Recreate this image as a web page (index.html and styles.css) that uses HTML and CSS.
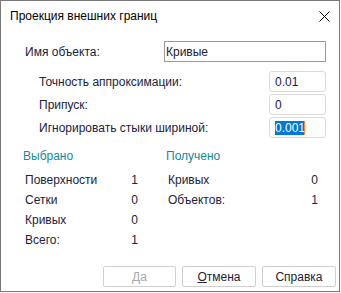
FILE: index.html
```html
<!DOCTYPE html>
<html>
<head>
  <title>Проекция внешних границ</title>
  <meta http-equiv="Content-Type" content="text/html; charset=utf-8">
  <link rel="stylesheet" href="styles.css">
</head>
<body>
<div class="dialog">
  <div class="titlebar">
    <span class="title">Проекция внешних границ</span>
    <svg class="close" width="11" height="11" viewBox="0 0 11 11">
      <path d="M0.5 0.5 L10.5 10.5 M10.5 0.5 L0.5 10.5" stroke="#000" stroke-width="1" fill="none"/>
    </svg>
  </div>

  <div class="name-row">
    <span class="name-label">Имя объекта:</span>
    <div class="field field-name">Кривые</div>
  </div>

  <div class="params">
    <span>Точность аппроксимации:</span>
    <div class="field field-num">0.01</div>
    <span>Припуск:</span>
    <div class="field field-num">0</div>
    <span>Игнорировать стыки шириной:</span>
    <div class="field field-num"><span class="selected">0.001</span></div>
  </div>

  <div class="stats">
    <div class="col">
      <div class="col-head">Выбрано</div>
      <div class="stat"><span>Поверхности</span><span>1</span></div>
      <div class="stat"><span>Сетки</span><span>0</span></div>
      <div class="stat"><span>Кривых</span><span>0</span></div>
      <div class="stat"><span>Всего:</span><span>1</span></div>
    </div>
    <div class="col">
      <div class="col-head">Получено</div>
      <div class="stat"><span>Кривых</span><span>0</span></div>
      <div class="stat"><span>Объектов:</span><span class="value-dark">1</span></div>
    </div>
  </div>

  <div class="buttons">
    <button class="btn btn-yes" disabled>Да</button>
    <button class="btn btn-cancel"><u>О</u>тмена</button>
    <button class="btn btn-help">Справка</button>
  </div>
</div>
</body>
</html>
```

FILE: styles.css
```css
body {
  margin: 0;
  background: #fff;
  font-family: "Liberation Sans", Arial, sans-serif;
  font-size: 12px;
  color: #22223a;
}

div.dialog {
  width: 340px;
  height: 292px;
  box-sizing: border-box;
  border: 1px solid #7a7a7a;
  background: #fff;
  display: flex;
  flex-direction: column;
}

div.titlebar {
  height: 40px;
  box-sizing: border-box;
  padding: 8px 9px 0 9px;
  display: flex;
  justify-content: space-between;
  align-items: flex-start;
  line-height: 14px;
}

.title {
  color: #000;
}

.close {
  margin-top: 2px;
}

div.name-row {
  display: flex;
  align-items: center;
  padding-left: 24px;
  line-height: 14px;
}

.name-label {
  width: 139px;
}

div.field {
  height: 21px;
  box-sizing: border-box;
  display: flex;
  align-items: center;
  line-height: 14px;
  background: #fff;
}

div.field-name {
  width: 162px;
  border: 1px solid #9a9a9a;
  padding-left: 1px;
}

div.params {
  margin-top: 9px;
  padding-left: 38px;
  display: grid;
  grid-template-columns: 230px 57px;
  grid-auto-rows: 21px;
  row-gap: 2px;
  align-items: center;
  line-height: 14px;
}

div.field-num {
  border: 1px solid #dadada;
  border-radius: 3px;
  padding-left: 5px;
}

.selected {
  background: #0078d7;
  color: #fff;
  box-shadow: inset -1px 0 #ff8728;
}

div.stats {
  margin-top: 8px;
  padding-left: 22px;
  display: grid;
  grid-template-columns: 115px 152px;
  column-gap: 28px;
  line-height: 20px;
}

div.col-head {
  color: #14879a;
  margin-bottom: 4px;
}

div.stat {
  display: flex;
  justify-content: space-between;
  padding-left: 2px;
}

.value-dark {
  color: #2a1a6a;
}

div.buttons {
  margin-top: auto;
  padding: 0 3px 4px 0;
  display: flex;
  justify-content: flex-end;
  gap: 6px;
}

button.btn {
  height: 21px;
  width: 74px;
  padding: 0;
  border: 1px solid #d0d0d0;
  border-radius: 2px;
  background: #fff;
  font-family: "Liberation Sans", Arial, sans-serif;
  font-size: 12px;
  color: #22223a;
}

button.btn-yes {
  width: 73px;
  color: #a8a8a8;
}
```
